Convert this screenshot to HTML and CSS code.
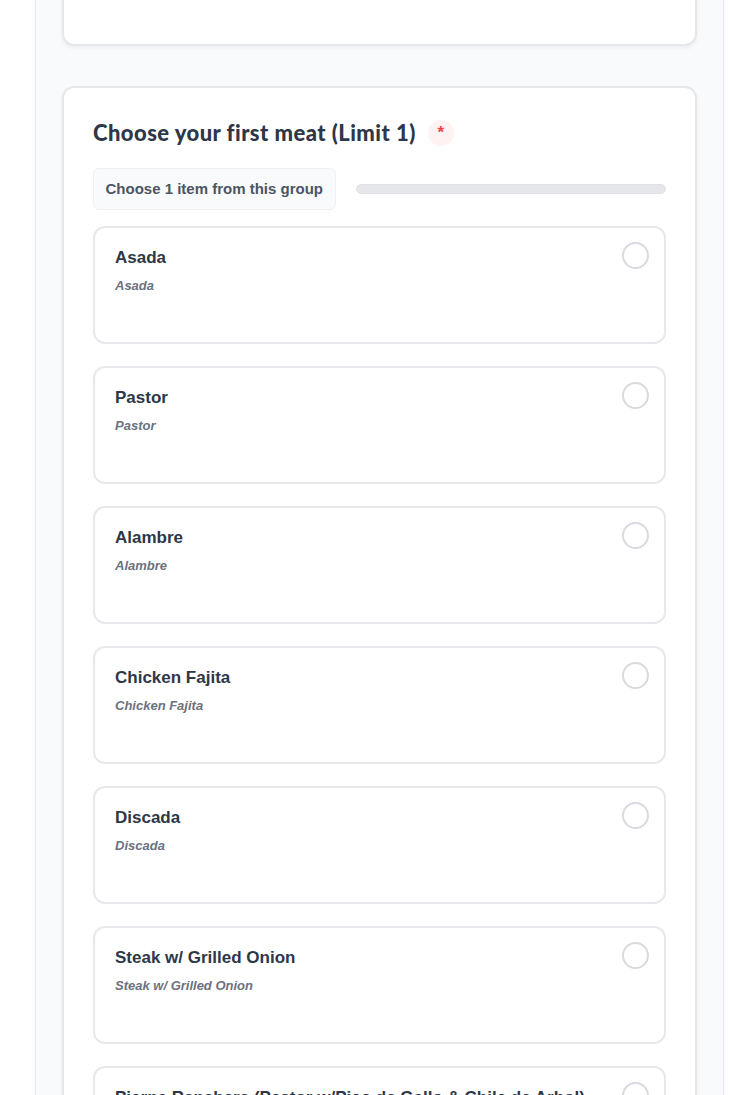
FILE: index.html
```html
<!DOCTYPE html>
<html>
<head>
<meta charset="utf-8">
<link rel="stylesheet" href="styles.css">
</head>
<body>
<div class="page">
  <div class="card card-top"></div>
  <div class="card group">
    <div class="group-head">
      <h2 class="group-title">Choose your first meat (Limit 1)</h2>
      <span class="req">*</span>
    </div>
    <div class="group-meta">
      <span class="pill">Choose 1 item from this group</span>
      <div class="progress"></div>
    </div>
    <div class="items">
      <div class="item"><div class="item-text"><div class="item-name">Asada</div><div class="item-desc">Asada</div></div><span class="radio"></span></div>
      <div class="item"><div class="item-text"><div class="item-name">Pastor</div><div class="item-desc">Pastor</div></div><span class="radio"></span></div>
      <div class="item"><div class="item-text"><div class="item-name">Alambre</div><div class="item-desc">Alambre</div></div><span class="radio"></span></div>
      <div class="item"><div class="item-text"><div class="item-name">Chicken Fajita</div><div class="item-desc">Chicken Fajita</div></div><span class="radio"></span></div>
      <div class="item"><div class="item-text"><div class="item-name">Discada</div><div class="item-desc">Discada</div></div><span class="radio"></span></div>
      <div class="item"><div class="item-text"><div class="item-name">Steak w/ Grilled Onion</div><div class="item-desc">Steak w/ Grilled Onion</div></div><span class="radio"></span></div>
      <div class="item"><div class="item-text"><div class="item-name">Pierna Ranchera (Pastor w/Pico de Gallo &amp; Chile de Arbol)</div><div class="item-desc">Pierna Ranchera (Pastor w/Pico de Gallo &amp; Chile de Arbol)</div></div><span class="radio"></span></div>
    </div>
  </div>
</div>
</body>
</html>
```
FILE: styles.css
```css
* { box-sizing: border-box; }
html, body { margin: 0; padding: 0; background: #ffffff; }
body { font-family: "Liberation Sans", Arial, sans-serif; overflow: hidden; height: 1095px; }
.page {
  margin-left: 35px;
  width: 689px;
  min-height: 1200px;
  background: #f9fafb;
  border-left: 1px solid #e5e7eb;
  border-right: 1px solid #e5e7eb;
  padding: 0 26px;
  box-shadow: 0 0 6px rgba(0,0,0,0.04);
}
.card {
  background: #ffffff;
  border: 2px solid #e5e7eb;
  border-radius: 12px;
  box-shadow: 0 2px 4px rgba(0,0,0,0.05);
}
.card-top {
  margin-top: -30px;
  height: 76px;
}
.group {
  margin-top: 40px;
  padding: 30px 29px 40px 29px;
}
.group-head {
  display: flex;
  align-items: center;
  gap: 12px;
  height: 30px;
}
.group-title {
  margin: 0;
  font-family: "Lato", sans-serif;
  font-weight: 900;
  font-size: 22px;
  line-height: 30px;
  color: #2d3748;
  letter-spacing: 0.45px;
}
.req {
  width: 26px;
  height: 26px;
  border-radius: 50%;
  background: #fef2f2;
  color: #ef4444;
  font-size: 17px;
  font-weight: bold;
  display: flex;
  align-items: flex-start;
  justify-content: center;
  line-height: 24px;
  padding-top: 1px;
}
.group-meta {
  display: flex;
  align-items: center;
  gap: 20px;
  margin-top: 20px;
}
.pill {
  display: inline-block;
  height: 42px;
  line-height: 40px;
  padding: 0 11.5px;
  background: #f9fafb;
  border: 1px solid #eef0f3;
  border-radius: 6px;
  font-size: 15px;
  font-weight: bold;
  color: #4b5563;
  white-space: nowrap;
}
.progress {
  flex: 1;
  height: 10px;
  border-radius: 5px;
  background: #e5e7eb;
  border: 1px solid #e0e2e6;
}
.items {
  margin-top: 16px;
  display: flex;
  flex-direction: column;
  gap: 22px;
}
.item {
  display: flex;
  align-items: flex-start;
  justify-content: space-between;
  min-height: 118px;
  border: 2px solid #e7e8eb;
  border-radius: 12px;
  padding: 14px 15px 0 20px;
  background: #ffffff;
}
.item-text { padding-top: 4px; }
.item-name {
  font-size: 17px;
  line-height: 24px;
  font-weight: bold;
  color: #2d3748;
}
.item-desc {
  margin-top: 7px;
  font-size: 13px;
  line-height: 18px;
  font-weight: bold;
  font-style: italic;
  color: #6b7280;
}
.radio {
  flex: none;
  width: 27px;
  height: 27px;
  border: 2px solid #d8dadf;
  border-radius: 50%;
  background: #ffffff;
}
```
